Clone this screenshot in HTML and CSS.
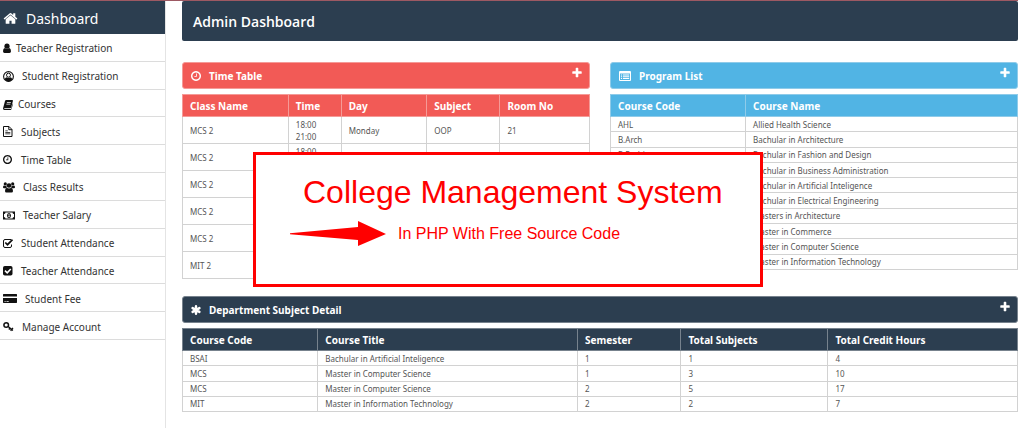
FILE: index.html
```
<!DOCTYPE html>
<html lang="en">
<head>
<meta charset="utf-8">
<title>Admin Dashboard</title>
<link rel="stylesheet" href="styles.css">
</head>
<body>
<svg class="sprite" aria-hidden="true">
  <symbol id="home" viewBox="0 0 1792 1792"><path d="M1472 992v480q0 26-19 45t-45 19h-384v-384h-256v384h-384q-26 0-45-19t-19-45v-480q0-1 .5-3t.5-3l575-474 575 474q1 2 1 6zm223-69l-62 74q-8 9-21 11h-3q-13 0-21-7l-692-577-692 577q-12 8-24 7-13-2-21-11l-62-74q-8-10-7-23.5t11-21.5l719-599q32-26 76-26t76 26l244 204v-195q0-14 9-23t23-9h192q14 0 23 9t9 23v408l219 182q10 8 11 21.5t-7 23.5z"/></symbol>
  <symbol id="plus" viewBox="0 0 1792 1792"><path d="M1600 736v192q0 40-28 68t-68 28h-416v416q0 40-28 68t-68 28h-192q-40 0-68-28t-28-68v-416h-416q-40 0-68-28t-28-68v-192q0-40 28-68t68-28h416v-416q0-40 28-68t68-28h192q40 0 68 28t28 68v416h416q40 0 68 28t28 68z"/></symbol>
  <symbol id="clock" viewBox="128 128 1536 1536"><path d="M1024 544v448q0 14-9 23t-23 9h-320q-14 0-23-9t-9-23v-64q0-14 9-23t23-9h224v-352q0-14 9-23t23-9h64q14 0 23 9t9 23zm416 352q0-148-73-273t-198-198-273-73-273 73-198 198-73 273 73 273 198 198 273 73 273-73 198-198 73-273zm224 0q0 209-103 385.5t-279.5 279.5-385.5 103-385.5-103-279.5-279.5-103-385.5 103-385.5 279.5-279.5 385.5-103 385.5 103 279.5 279.5 103 385.5z"/></symbol>
  <symbol id="list" viewBox="0 0 12 10"><path fill-rule="evenodd" d="M1 0h10q1 0 1 1v8q0 1-1 1H1Q0 10 0 9V1Q0 0 1 0zM1 2.4V9h10V2.4z"/><path d="M1.9 3.4h1.2v1H1.9zM4 3.4h6.2v1H4zM1.9 5.2h1.2v1H1.9zM4 5.2h6.2v1H4zM1.9 7h1.2v1H1.9zM4 7h6.2v1H4z"/></symbol>
  <symbol id="asterisk" viewBox="0 0 10 10"><path stroke="currentColor" stroke-width="2.4" stroke-linecap="round" d="M5 1.2v7.6M1.6 3.1l6.8 3.8M8.4 3.1L1.6 6.9"/></symbol>
</svg>

<div class="page">
  <nav class="sidebar" aria-label="Main">
    <a class="brand" href="#"><svg class="brand-icon"><use href="#home"/></svg>Dashboard</a>
    <ul class="menu">
      <li><a href="#"><svg class="ico ico-8" viewBox="0 0 8 11"><circle cx="4" cy="3.2" r="2.6"/><path d="M1.8 5q-1.8.4-1.8 3.2Q0 10 1.5 10h5Q8 10 8 8.2 8 5.400 6.200 5 4 6.900 1.800 5z"/></svg>Teacher Registration</a></li>
      <li><a href="#"><svg class="ico ico-14" viewBox="0 0 14 11"><circle cx="5.500" cy="5.500" r="4.900" fill="none" stroke="currentColor" stroke-width="1.100"/><circle cx="5.500" cy="4.200" r="2" fill="none" stroke="currentColor"/><path d="M3.500 6.200q2 1.500 4 0 1.500.6 1.700 2.300Q7.800 10.400 5.500 10.400T1.800 8.500Q2 6.800 3.500 6.200z"/></svg>Student Registration</a></li>
      <li><a href="#"><svg class="ico ico-10" viewBox="0 0 10 11"><path fill-rule="evenodd" d="M3.200 1h6Q10.200 1 9.900 2L8.200 8.400Q8 9.200 7.100 9.200H1.800q-.7 0-.7.5 0 .4.700.4h5.700q.5 0 .7-.5l1.500-5q.4.400.200 1L8.500 10Q8.200 11 7.300 11H1.500Q.2 10.900 0 9.400L2 2Q2.300 1 3.200 1zM4 3l-.2.800h4L8 3zM3.500 4.800l-.2.800h4l.2-.8z"/></svg>Courses</a></li>
      <li><a href="#"><svg class="ico ico-13" viewBox="0 0 13 11"><path fill="none" stroke="currentColor" d="M.5.5H6l3 3v7H.5zM5.800.5v3.200H9"/><path d="M2.300 4.500h2.500v.8H2.300zM2.300 6h5v.8h-5zM2.300 7.500h5v.8h-5z"/></svg>Subjects</a></li>
      <li><a href="#"><svg class="ico ico-13" viewBox="0 0 13 11"><use href="#clock" y="1" width="9" height="9"/></svg>Time Table</a></li>
      <li><a href="#"><svg class="ico ico-15" viewBox="0 0 15 11"><circle cx="2.300" cy="1.900" r="1.600"/><circle cx="9.700" cy="1.900" r="1.600"/><circle cx="6" cy="3.500" r="2.300"/><path d="M1 3.500q1 .7 2.400.2.100 1 .7 1.700-1 .1-1.700.8H1Q0 6.200 0 5.200 0 3.700 1 3.500zM11 3.500q-1 .7-2.400.2-.1 1-.7 1.700 1 .1 1.700.8H11q1 0 1-1 0-1.500-1-1.700zM3.800 5.700q2.200 1.500 4.400 0Q10 6.200 10 9q0 1.500-1.400 1.500H3.400Q2 10.500 2 9q0-2.800 1.800-3.300z"/></svg>Class Results</a></li>
      <li><a href="#"><svg class="ico ico-15" viewBox="0 0 15 11"><path fill-rule="evenodd" d="M0 1.500h12v8H0zM2.500 2.500Q2.300 4 1 4.100v2.800q1.300.1 1.500 1.600h7q.2-1.500 1.500-1.600V4.100Q9.700 4 9.500 2.500z"/><path fill-rule="evenodd" d="M6 3q2 0 2 2.500T6 8 4 5.500 6 3zM5.200 4.500l.5.300v1.600h-.6V7h1.800v-.6h-.5V3.900h-.6z"/></svg>Teacher Salary</a></li>
      <li><a href="#"><svg class="ico ico-13" viewBox="0 0 13 11"><path fill="none" stroke="currentColor" d="M8 1.500H2Q.5 1.500.5 3v5Q.5 9.500 2 9.500h5Q8.500 9.500 8.500 8V6.500"/><path fill="none" stroke="currentColor" stroke-width="1.700" d="M2.300 4.500l2.200 2.200 5-5"/></svg>Student Attendance</a></li>
      <li><a href="#"><svg class="ico ico-13" viewBox="0 0 13 11"><rect y="1" width="9.500" height="9.500" rx="1.800"/><path fill="none" stroke="#fff" stroke-width="1.600" d="M2 5.700l2.200 2.100L7.800 4"/></svg>Teacher Attendance</a></li>
      <li><a href="#"><svg class="ico ico-17" viewBox="0 0 17 11"><path fill-rule="evenodd" d="M.5 1h13l.5.500v2H0v-2zM0 5h14v4.500l-.5.500H.5L0 9.500zM1.500 8v.8h1.200V8zM3.500 8v.8h2.200V8z"/></svg>Student Fee</a></li>
      <li><a href="#"><svg class="ico ico-14" viewBox="0 0 14 11"><circle cx="3.200" cy="4" r="2.300" fill="none" stroke="currentColor" stroke-width="1.500"/><path fill="none" stroke="currentColor" stroke-width="1.300" d="M4.900 5.300l5 4.300M7.100 7l-1.300 1.500M8.900 8.300l-1.300 1.500M9 8l1-1.200"/></svg>Manage Account</a></li>
    </ul>
  </nav>

  <main class="content">
    <h1 class="title">Admin Dashboard</h1>

    <div class="columns">
      <section class="panel red">
        <header class="panel-head"><svg class="head-icon"><use href="#clock"/></svg><h2>Time Table</h2><button class="add" aria-label="Add time slot"><svg><use href="#plus"/></svg></button></header>
        <table class="schedule">
          <thead><tr><th class="c-class">Class Name</th><th class="c-time">Time</th><th class="c-day">Day</th><th class="c-subject">Subject</th><th>Room No</th></tr></thead>
          <tbody>
            <tr><td>MCS 2</td><td>18:00<br>21:00</td><td>Monday</td><td>OOP</td><td>21</td></tr>
            <tr><td>MCS 2</td><td>18:00<br>&nbsp;</td><td></td><td></td><td></td></tr>
            <tr><td>MCS 2</td><td></td><td></td><td></td><td></td></tr>
            <tr><td>MCS 2</td><td></td><td></td><td></td><td></td></tr>
            <tr><td>MCS 2</td><td></td><td></td><td></td><td></td></tr>
            <tr><td>MIT 2</td><td></td><td></td><td></td><td></td></tr>
          </tbody>
        </table>
      </section>

      <section class="panel blue">
        <header class="panel-head"><svg class="head-icon wide"><use href="#list"/></svg><h2>Program List</h2><button class="add" aria-label="Add program"><svg><use href="#plus"/></svg></button></header>
        <table class="programs">
          <thead><tr><th class="c-code">Course Code</th><th>Course Name</th></tr></thead>
          <tbody>
            <tr><td>AHL</td><td>Allied Health Science</td></tr>
            <tr><td>B.Arch</td><td>Bachular in Architecture</td></tr>
            <tr><td>B.Fashion</td><td>Bachular in Fashion and Design</td></tr>
            <tr><td></td><td>Bachular in Business Administration</td></tr>
            <tr><td></td><td>Bachular in Artificial Inteligence</td></tr>
            <tr><td></td><td>Bachular in Electrical Engineering</td></tr>
            <tr><td></td><td>Masters in Architecture</td></tr>
            <tr><td></td><td>Master in Commerce</td></tr>
            <tr><td></td><td>Master in Computer Science</td></tr>
            <tr><td></td><td>Master in Information Technology</td></tr>
          </tbody>
        </table>
      </section>
    </div>

    <section class="panel navy">
      <header class="panel-head"><svg class="head-icon"><use href="#asterisk"/></svg><h2>Department Subject Detail</h2><button class="add" aria-label="Add subject"><svg><use href="#plus"/></svg></button></header>
      <table class="departments">
        <thead><tr><th class="d-code">Course Code</th><th class="d-title">Course Title</th><th class="d-sem">Semester</th><th class="d-sub">Total Subjects</th><th>Total Credit Hours</th></tr></thead>
        <tbody>
          <tr><td>BSAI</td><td>Bachular in Artificial Inteligence</td><td>1</td><td>1</td><td>4</td></tr>
          <tr><td>MCS</td><td>Master in Computer Science</td><td>1</td><td>3</td><td>10</td></tr>
          <tr><td>MCS</td><td>Master in Computer Science</td><td>2</td><td>5</td><td>17</td></tr>
          <tr><td>MIT</td><td>Master in Information Technology</td><td>2</td><td>2</td><td>7</td></tr>
        </tbody>
      </table>
    </section>
  </main>

  <aside class="banner">
    <p class="banner-title">College Management System</p>
    <div class="banner-row">
      <svg class="arrow" viewBox="0 0 96 26"><path d="M0 12.300L68 6V0l28 13-28 12v-6L0 13.200z"/></svg>
      <p class="banner-sub">In PHP With Free Source Code</p>
    </div>
  </aside>
</div>
</body>
</html>
```
FILE: styles.css
```
* { box-sizing: border-box; }
body {
  margin: 0;
  background: #fff;
  color: #555;
  font-family: "Noto Sans", "Open Sans", sans-serif;
  font-size: 8px;
}
h1, h2, p, ul { margin: 0; padding: 0; }
svg { fill: currentColor; flex: none; }
.sprite { position: absolute; width: 0; height: 0; }

.page {
  position: relative;
  display: grid;
  grid-template-columns: 166px 1fr;
  min-height: 100vh;
  border-top: 1px solid #9d5963;
}

.sidebar { border-right: 1px solid #e4e4e4; }
.brand {
  display: flex;
  align-items: center;
  gap: 8px;
  height: 33px;
  padding: 2px 3px 0;
  background: #2c3e50;
  color: #fff;
  font-size: 14px;
  text-decoration: none;
}
.brand-icon { width: 15px; height: 15px; }
.menu {
  display: grid;
  grid-auto-rows: 1fr;
  min-height: 306px;
  list-style: none;
}
.menu li { display: grid; border-bottom: 1px solid #dcdcdc; }
.menu a {
  display: flex;
  align-items: center;
  gap: 5px;
  padding: 2px 0 0 3px;
  color: #333;
  font-size: 10px;
  line-height: 16px;
  text-decoration: none;
}
.ico { height: 11px; color: #111; }
.ico-8 { width: 8px; }
.ico-10 { width: 10px; }
.ico-13 { width: 13px; }
.ico-14 { width: 14px; }
.ico-15 { width: 15px; }
.ico-17 { width: 17px; }

.content { padding-left: 16px; }
.title {
  height: 40px;
  padding: 1px 0 0 11px;
  border-radius: 2px;
  background: #2c3e50;
  color: #fff;
  font-family: "Open Sans", "Noto Sans", sans-serif;
  font-size: 14px;
  font-weight: 600;
  line-height: 40px;
}
.columns {
  display: grid;
  grid-template-columns: 1fr 1fr;
  gap: 20px;
  margin: 21px 0 17px;
}
.red { --accent: #f25a56; --edge: #f59a97; }
.blue { --accent: #51b4e4; --edge: #8fcbe9; }
.navy { --accent: #2c3e50; --edge: #77828d; }
.panel-head {
  display: flex;
  align-items: center;
  gap: 8px;
  height: 27px;
  margin-bottom: 5px;
  padding: 0 6px 0 8px;
  border: 1px solid var(--edge);
  border-radius: 3px;
  background: var(--accent);
  color: #fff;
}
.panel-head h2 { flex: 1; font-size: 10px; line-height: 16px; font-weight: 700; }
.head-icon { width: 10px; height: 10px; }
.head-icon.wide { width: 12px; }
.add {
  display: flex;
  align-self: flex-start;
  padding: 4px 0 0;
  border: 0;
  background: none;
  color: #fff;
}
.add svg { width: 12px; height: 12px; }

table { width: 100%; border-collapse: collapse; table-layout: fixed; }
th, td { padding: 0 7px; border: 1px solid #d2d2d2; text-align: left; white-space: nowrap; }
th {
  height: 22px;
  border-color: var(--edge);
  background: var(--accent);
  color: #fff;
  font-size: 10px;
  line-height: 16px;
}
td { height: 15px; padding-top: 1px; line-height: 12px; }
.schedule td { height: 27px; }
.programs { height: 176px; }
.departments { height: 84px; }
.c-class { width: 26%; }
.c-time { width: 13%; }
.c-day { width: 21%; }
.c-subject { width: 18%; }
.c-code { width: 33.2%; }
.d-code { width: 16.2%; }
.d-title { width: 31.1%; }
.d-sem { width: 12.4%; }
.d-sub { width: 17.6%; }

.banner {
  position: absolute;
  top: 151px;
  left: 253px;
  width: 510px;
  padding: 18px 34px 37px;
  border: 3px solid #f00;
  background: #fff;
  color: #f00;
  font-family: "Liberation Sans", Arial, sans-serif;
}
.banner-title { padding-left: 13px; font-size: 32px; line-height: 38px; white-space: nowrap; }
.banner-row { display: flex; align-items: center; gap: 12px; margin-top: 10px; }
.arrow { width: 96px; height: 26px; }
.banner-sub { font-size: 16px; line-height: 24px; white-space: nowrap; }
```
